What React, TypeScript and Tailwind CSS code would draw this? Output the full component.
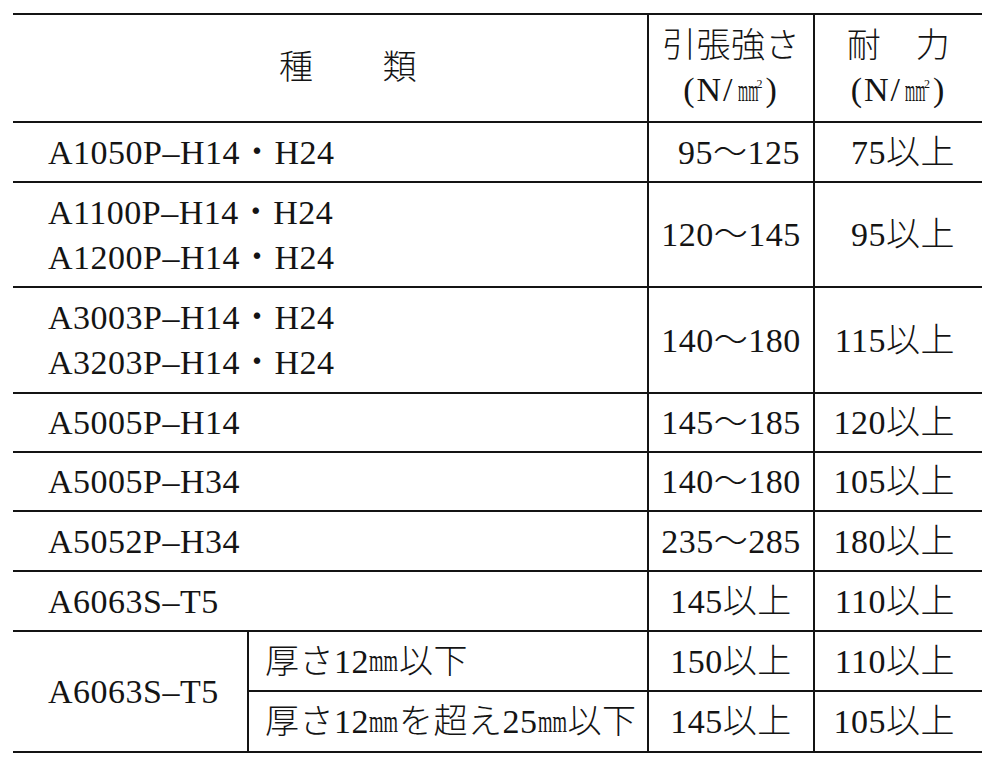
import React from "react";

const MmHdr = () => (
  <span className="ml-[3px] inline-block w-[20px] origin-left scale-x-[0.42] text-[31px] leading-[0] tracking-normal">mm</span>
);

const Mm = () => (
  <span className="inline-block w-[30px] origin-left scale-x-[0.6] text-[31px] leading-[0] tracking-normal">mm</span>
);

const Unit = () => (
  <div className="whitespace-nowrap tracking-[2px]">
    (N/
    <MmHdr />
    <sup className="text-[12px] -top-[13px] -ml-[1px] tracking-normal">2</sup>
    <span className="ml-[3px]">)</span>
  </div>
);

type Row = { names: string[]; h: string; v1: string; v2: string; v1Class?: string };

const rows: Row[] = [
  { names: ["A1050P–H14・H24"], h: "h-[60px]", v1: "95～125", v2: "75以上", v1Class: "pl-4" },
  { names: ["A1100P–H14・H24", "A1200P–H14・H24"], h: "h-[105px]", v1: "120～145", v2: "95以上" },
  { names: ["A3003P–H14・H24", "A3203P–H14・H24"], h: "h-[106px]", v1: "140～180", v2: "115以上" },
  { names: ["A5005P–H14"], h: "h-[59px]", v1: "145～185", v2: "120以上" },
  { names: ["A5005P–H34"], h: "h-[59px]", v1: "140～180", v2: "105以上" },
  { names: ["A5052P–H34"], h: "h-[60px]", v1: "235～285", v2: "180以上" },
  { names: ["A6063S–T5"], h: "h-[60px]", v1: "145以上", v2: "110以上" },
];

export default function App() {
  return (
    <div className="min-h-[767px] w-[1000px] bg-white pl-[13px] pt-[13px] font-['Liberation_Serif','Noto_Sans_CJK_JP',serif] text-[34px] font-light tracking-[0.5px] text-[#141414]">
      <div className="w-[969px] border-t-2">
        {/* header */}
        <div className="flex h-[108px] border-b-2">
          <div className="flex w-[634px] items-center justify-center pl-[36px] leading-[44px]">種　　類</div>
          <div className="flex w-[166px] flex-col items-center justify-center border-l-2 leading-[44px]">
            <div>引張強さ</div>
            <Unit />
          </div>
          <div className="flex flex-1 flex-col items-center justify-center border-l-2 leading-[44px]">
            <div>耐　力</div>
            <Unit />
          </div>
        </div>

        {rows.map((r, i) => (
          <div key={i} className={`flex border-b-2 ${r.h}`}>
            <div className="flex w-[634px] flex-col justify-center pl-[35px] leading-[45px]">
              {r.names.map((n, j) => (
                <div key={j} className="whitespace-nowrap">{n}</div>
              ))}
            </div>
            <div className={`flex w-[166px] items-center justify-center border-l-2 leading-[45px] ${r.v1Class ?? ""}`}>
              {r.v1}
            </div>
            <div className="flex flex-1 items-center justify-end border-l-2 pr-[27px] leading-[45px]">{r.v2}</div>
          </div>
        ))}

        {/* merged row */}
        <div className="flex h-[121px] border-b-2">
          <div className="flex w-[234px] items-center pl-[35px] leading-[45px]">A6063S–T5</div>
          <div className="flex flex-1 flex-col border-l-2">
            <div className="flex h-[60px] border-b-2">
              <div className="flex w-[398px] items-center whitespace-nowrap pl-4 leading-[45px]">
                厚さ12<Mm />以下
              </div>
              <div className="flex w-[166px] items-center justify-center border-l-2 leading-[45px]">150以上</div>
              <div className="flex flex-1 items-center justify-end border-l-2 pr-[27px] leading-[45px]">110以上</div>
            </div>
            <div className="flex flex-1">
              <div className="flex w-[398px] items-center whitespace-nowrap pl-4 leading-[45px]">
                厚さ12<Mm />を超え25<Mm />以下
              </div>
              <div className="flex w-[166px] items-center justify-center border-l-2 leading-[45px]">145以上</div>
              <div className="flex flex-1 items-center justify-end border-l-2 pr-[27px] leading-[45px]">105以上</div>
            </div>
          </div>
        </div>
      </div>
    </div>
  );
}
